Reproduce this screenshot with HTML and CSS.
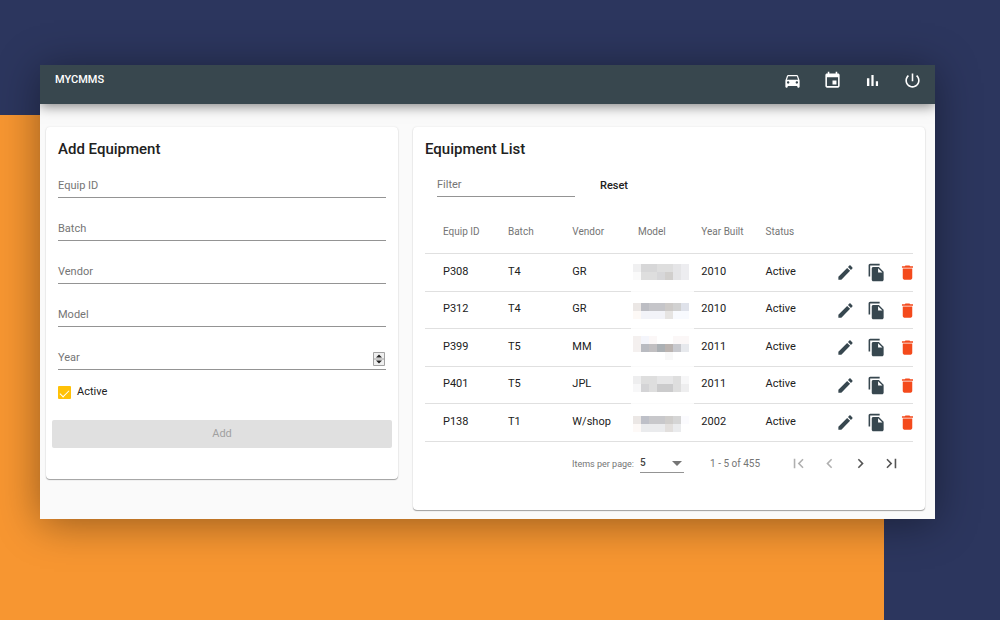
FILE: index.html
```html
<!DOCTYPE html>
<html lang="en">
<head>
<meta charset="utf-8">
<meta name="viewport" content="width=device-width, initial-scale=1">
<title>MYCMMS</title>
<link rel="stylesheet" href="styles.css">
</head>
<body>
<svg class="defs" aria-hidden="true">
  <symbol id="edit" viewBox="0 0 24 24"><path d="M3 17.250V21h3.750L17.810 9.940l-3.750-3.750L3 17.250zM20.710 7.040c.39-.39.39-1.020 0-1.410l-2.340-2.340c-.39-.39-1.020-.39-1.410 0l-1.830 1.830 3.750 3.750 1.830-1.830z"/></symbol>
  <symbol id="copy" viewBox="0 0 24 24"><path d="M16 1H4c-1.100 0-2 .9-2 2v14h2V3h12V1zm-1 4l6 6v10c0 1.100-.9 2-2 2H7.990C6.890 23 6 22.100 6 21V7c0-1.100.89-2 1.990-2h7zm-1 7h5.500L14 6.500V12z"/></symbol>
  <symbol id="trash" viewBox="0 0 24 24"><path d="M6 19c0 1.100.9 2 2 2h8c1.100 0 2-.9 2-2V7H6v12zM19 4h-3.500l-1-1h-5l-1 1H5v2h14V4z"/></symbol>
</svg>
<div class="window">
  <header class="topbar">
    <h1 class="brand">MYCMMS</h1>
    <nav class="nav">
      <a href="#equipment" aria-label="Equipment"><svg class="icon" viewBox="0 0 24 24"><path d="M18.920 6.010C18.720 5.420 18.160 5 17.500 5h-11c-.66 0-1.210.42-1.420 1.010L3 12v8c0 .55.45 1 1 1h1c.55 0 1-.45 1-1v-1h12v1c0 .55.45 1 1 1h1c.55 0 1-.45 1-1v-8l-2.080-5.990zM6.500 16c-.83 0-1.500-.67-1.500-1.500S5.670 13 6.500 13s1.500.67 1.500 1.500S7.330 16 6.500 16zm11 0c-.83 0-1.500-.67-1.500-1.500s.67-1.500 1.500-1.500 1.500.67 1.500 1.500-.67 1.500-1.500 1.500zM5 11l1.500-4.500h11L19 11H5z"/></svg></a>
      <a href="#calendar" aria-label="Calendar"><svg class="icon" viewBox="0 0 24 24"><path d="M17 12h-5v5h5v-5zM16 1v2H8V1H6v2H5c-1.110 0-1.990.9-1.990 2L3 19c0 1.100.89 2 2 2h14c1.100 0 2-.9 2-2V5c0-1.100-.9-2-2-2h-1V1h-2zm3 18H5V8h14v11z"/></svg></a>
      <a href="#reports" aria-label="Reports"><svg class="icon" viewBox="0 0 24 24"><path d="M5 9.200h3V19H5zM10.600 5h2.800v14h-2.800zm5.600 8H19v6h-2.800z"/></svg></a>
      <a href="#logout" aria-label="Log out"><svg class="icon" viewBox="0 0 24 24"><path d="M13 3h-2v10h2V3zm4.830 2.170l-1.420 1.420C17.990 7.860 19 9.810 19 12c0 3.870-3.130 7-7 7s-7-3.130-7-7c0-2.190 1.010-4.140 2.580-5.420L6.170 5.170C4.230 6.820 3 9.260 3 12c0 4.970 4.030 9 9 9s9-4.030 9-9c0-2.740-1.230-5.180-3.170-6.830z"/></svg></a>
    </nav>
  </header>
  <main class="content">
    <section class="card">
      <h2 class="title">Add Equipment</h2>
      <form class="form">
        <div class="field"><input id="equip-id" type="text"><label for="equip-id">Equip ID</label></div>
        <div class="field"><input id="batch" type="text"><label for="batch">Batch</label></div>
        <div class="field"><input id="vendor" type="text"><label for="vendor">Vendor</label></div>
        <div class="field"><input id="model" type="text"><label for="model">Model</label></div>
        <div class="field"><input id="year" type="number"><label for="year">Year</label><svg class="stepper" viewBox="0 0 12 14"><path fill="#efefef" stroke="#a2a2a2" d="M.5.5h11v13H.5zM.5 7h11"/><path fill="#222" d="M6 2.500l3 3H3zM6 11.500l3-3H3z"/></svg></div>
        <div class="check"><input id="active" type="checkbox" checked><label for="active">Active</label></div>
        <button class="add" type="submit" disabled>Add</button>
      </form>
    </section>
    <section class="card">
      <h2 class="title">Equipment List</h2>
      <div class="filter">
        <div class="field"><input id="filter" type="text"><label for="filter">Filter</label></div>
        <button class="reset" type="button">Reset</button>
      </div>
      <table class="list">
        <colgroup><col class="c-id"><col class="c-batch"><col class="c-vendor"><col class="c-model"><col class="c-year"><col class="c-status"><col class="c-actions"></colgroup>
        <thead>
          <tr><th>Equip ID</th><th>Batch</th><th>Vendor</th><th class="inset">Model</th><th class="inset">Year Built</th><th>Status</th><td></td></tr>
        </thead>
        <tbody>
          <tr><td>P308</td><td>T4</td><td>GR</td>
            <td class="masked"><svg class="mosaic" viewBox="0 0 60 32" shape-rendering="crispEdges"><path fill="#f0f0f1" d="M2 8h8v8H2z"/><path fill="#fafafa" d="M2 16h8v8H2z"/><path fill="#d7d7d8" d="M10 8h16v8H10z"/><path fill="#dedede" d="M26 8h16v8H26zM10 16h16v8H10z"/><path fill="#e5e5e7" d="M42 8h8v16h-8z"/><path fill="#d7d7d9" d="M26 16h8v8h-8z"/><path fill="#d1cfcd" d="M34 16h8v8h-8z"/><path fill="#ededf0" d="M50 8h8v16h-8z"/></svg></td>
            <td class="inset">2010</td><td>Active</td>
            <td class="actions"><div class="tools"><button type="button" aria-label="Edit P308"><svg class="icon"><use href="#edit"/></svg></button><button type="button" aria-label="Copy P308"><svg class="icon"><use href="#copy"/></svg></button><button class="delete" type="button" aria-label="Delete P308"><svg class="icon"><use href="#trash"/></svg></button></div></td></tr>
          <tr><td>P312</td><td>T4</td><td>GR</td>
            <td class="masked"><svg class="mosaic" viewBox="0 0 60 32" shape-rendering="crispEdges"><path fill="#ebe7e5" d="M2 10h8v8H2z"/><path fill="#fdf9f6" d="M2 18h8v8H2z"/><path fill="#bcbdc3" d="M10 10h8v8h-8z"/><path fill="#c5c5c9" d="M18 10h16v8H18z"/><path fill="#cdcac8" d="M34 10h8v8h-8z"/><path fill="#d1d1d1" d="M42 10h8v8h-8z"/><path fill="#dfe2ea" d="M50 10h8v8h-8z"/><path fill="#f2f3f8" d="M10 18h24v8H10z"/><path fill="#e6e4e2" d="M34 18h8v8h-8z"/><path fill="#f8fafe" d="M42 18h16v8H42z"/></svg></td>
            <td class="inset">2010</td><td>Active</td>
            <td class="actions"><div class="tools"><button type="button" aria-label="Edit P312"><svg class="icon"><use href="#edit"/></svg></button><button type="button" aria-label="Copy P312"><svg class="icon"><use href="#copy"/></svg></button><button class="delete" type="button" aria-label="Delete P312"><svg class="icon"><use href="#trash"/></svg></button></div></td></tr>
          <tr><td>P399</td><td>T5</td><td>MM</td>
            <td class="masked"><svg class="mosaic" viewBox="0 0 60 32" shape-rendering="crispEdges"><path fill="#f4f0ef" d="M2 5h8v16H2z"/><path fill="#f4f5fb" d="M10 5h8v8h-8z"/><path fill="#fbf7f7" d="M18 5h8v8h-8zM42 5h16v8H42z"/><path fill="#b9bbc1" d="M10 13h8v8h-8z"/><path fill="#c1bfc1" d="M18 13h8v8h-8z"/><path fill="#abb0b4" d="M26 13h8v8h-8z"/><path fill="#bab3b0" d="M34 13h8v8h-8z"/><path fill="#c8c9ce" d="M42 13h8v8h-8z"/><path fill="#e7e9ed" d="M50 13h8v8h-8z"/><path fill="#f8f8f8" d="M34 21h8v8h-8z"/></svg></td>
            <td class="inset">2011</td><td>Active</td>
            <td class="actions"><div class="tools"><button type="button" aria-label="Edit P399"><svg class="icon"><use href="#edit"/></svg></button><button type="button" aria-label="Copy P399"><svg class="icon"><use href="#copy"/></svg></button><button class="delete" type="button" aria-label="Delete P399"><svg class="icon"><use href="#trash"/></svg></button></div></td></tr>
          <tr><td>P401</td><td>T5</td><td>JPL</td>
            <td class="masked"><svg class="mosaic" viewBox="0 0 60 32" shape-rendering="crispEdges"><path fill="#eeeeef" d="M2 8h8v8H2zM50 16h8v8h-8z"/><path fill="#f7f7f8" d="M2 16h8v8H2zM50 8h8v8h-8z"/><path fill="#dedede" d="M10 8h16v8H10zM42 8h8v16h-8z"/><path fill="#e6e6e7" d="M26 8h16v8H26z"/><path fill="#d4d4d6" d="M10 16h8v8h-8z"/><path fill="#dedede" d="M18 16h8v8h-8z"/><path fill="#cbcbcc" d="M26 16h16v8H26z"/></svg></td>
            <td class="inset">2011</td><td>Active</td>
            <td class="actions"><div class="tools"><button type="button" aria-label="Edit P401"><svg class="icon"><use href="#edit"/></svg></button><button type="button" aria-label="Copy P401"><svg class="icon"><use href="#copy"/></svg></button><button class="delete" type="button" aria-label="Delete P401"><svg class="icon"><use href="#trash"/></svg></button></div></td></tr>
          <tr><td>P138</td><td>T1</td><td>W/shop</td>
            <td class="masked"><svg class="mosaic" viewBox="0 0 60 32" shape-rendering="crispEdges"><path fill="#ebe7e5" d="M2 10h8v8H2z"/><path fill="#fdf9f7" d="M2 18h8v8H2z"/><path fill="#bec0c8" d="M10 10h8v8h-8z"/><path fill="#c8c8cb" d="M18 10h16v8H18z"/><path fill="#cfcdcb" d="M34 10h8v8h-8z"/><path fill="#d5d5d5" d="M42 10h8v8h-8z"/><path fill="#eaebed" d="M10 18h24v8H10zM42 18h8v8h-8z"/><path fill="#e2dfdd" d="M34 18h8v8h-8z"/><path fill="#fbfbfe" d="M50 10h8v8h-8z"/></svg></td>
            <td class="inset">2002</td><td>Active</td>
            <td class="actions"><div class="tools"><button type="button" aria-label="Edit P138"><svg class="icon"><use href="#edit"/></svg></button><button type="button" aria-label="Copy P138"><svg class="icon"><use href="#copy"/></svg></button><button class="delete" type="button" aria-label="Delete P138"><svg class="icon"><use href="#trash"/></svg></button></div></td></tr>
        </tbody>
      </table>
      <div class="paginator">
        <label class="per-page" for="size">Items per page:</label>
        <div class="size"><select id="size"><option>5</option><option>10</option><option>25</option></select></div>
        <span class="range">1 - 5 of 455</span>
        <div class="pager">
          <button type="button" aria-label="First page" disabled><svg class="icon" viewBox="0 0 24 24"><path d="M18.410 16.590L13.820 12l4.590-4.590L17 6l-6 6 6 6zM6 6h2v12H6z"/></svg></button>
          <button type="button" aria-label="Previous page" disabled><svg class="icon" viewBox="0 0 24 24"><path d="M15.410 7.410L14 6l-6 6 6 6 1.410-1.410L10.830 12z"/></svg></button>
          <button type="button" aria-label="Next page"><svg class="icon" viewBox="0 0 24 24"><path d="M10 6L8.590 7.410 13.170 12l-4.580 4.590L10 18l6-6z"/></svg></button>
          <button type="button" aria-label="Last page"><svg class="icon" viewBox="0 0 24 24"><path d="M5.590 7.410L10.180 12l-4.590 4.590L7 18l6-6-6-6zM16 6h2v12h-2z"/></svg></button>
        </div>
      </div>
    </section>
  </main>
</div>
</body>
</html>
```
FILE: styles.css
```css
* { box-sizing: border-box; }

body {
  margin: 0;
  min-height: 100vh;
  padding: 65px 65px 65px 40px;
  background: linear-gradient(#f79631, #f79631) 0 115px / calc(100% - 116px) 100% no-repeat #2c365e;
  color: #212121;
  font: 11px/16px Roboto, sans-serif;
}

button, input, select { font: inherit; color: inherit; }
button { border: 0; padding: 0; background: none; cursor: pointer; }
button:disabled { cursor: default; }

.defs { display: none; }
.icon { display: block; width: 19px; height: 19px; fill: currentColor; }

.window {
  background: #fafafa;
  box-shadow: 0 4px 40px rgba(0, 0, 0, .4);
}

.topbar {
  display: flex;
  justify-content: space-between;
  align-items: center;
  padding: 6px 13px 14px 15px;
  background: #38474e;
  color: #fff;
  box-shadow: 0 2px 12px rgba(0, 0, 0, .5);
  clip-path: inset(0 0 -20px 0);
}
.brand { margin: 0 0 2px; font-size: 11px; line-height: 16px; font-weight: 500; }
.nav { display: flex; gap: 21px; }
.nav a { color: inherit; }

.content {
  display: grid;
  grid-template-columns: 352fr 512fr;
  align-items: start;
  gap: 15px;
  padding: 23px 10px 9px 6px;
}

.card {
  padding: 12px;
  border-radius: 4px;
  background: #fff;
  box-shadow: 0 1px 1px rgba(0, 0, 0, .35), 0 0 2px rgba(0, 0, 0, .1);
}
.title { margin: 0; font-size: 15px; line-height: 20px; font-weight: 500; }

.field { position: relative; height: 27px; border-bottom: 1px solid #949494; }
.field label { position: absolute; left: 0; top: 7px; color: #757575; pointer-events: none; }
.field input { width: 100%; height: 26px; padding: 6px 0 0; border: 0; outline: 0; background: none; }
.stepper { position: absolute; right: 1px; top: 9px; width: 12px; height: 14px; pointer-events: none; }

.form { display: grid; gap: 16px; margin-top: 12px; padding-bottom: 19px; }

.check { display: flex; align-items: center; gap: 6px; margin-top: -2px; }
.check input {
  appearance: none;
  display: grid;
  place-items: center;
  width: 13px;
  height: 13px;
  margin: 0;
  border-radius: 1px;
  background: #ffc107;
}
.check input:checked::before {
  content: "";
  width: 8px;
  height: 4px;
  border: solid #fff;
  border-width: 0 0 1px 1px;
  transform: rotate(-45deg);
}

.add {
  height: 28px;
  margin: 4px -6px 0;
  border-radius: 2px;
  background: #e0e0e0;
  color: #a0a0a0;
}

.filter { display: flex; align-items: center; gap: 25px; margin: 11px 0 15px 12px; }
.filter .field { width: 138px; }
.reset { font-weight: 500; padding-top: 4px; }

.list { width: 100%; table-layout: fixed; border-collapse: separate; border-spacing: 0; }
.c-id { width: 17%; }
.c-batch { width: 13.2%; }
.c-vendor { width: 12%; }
.c-model { width: 13%; }
.c-year { width: 14.6%; }
.c-status { width: 13.2%; }
.c-actions { width: 17%; }
.list th, .list td { height: 38px; padding: 0 0 2px; border-bottom: 1px solid #e0e0e0; text-align: left; }
.list thead th, .list thead td { height: 42px; }
.list tbody tr:nth-child(even) td { height: 37px; }
.list th { color: #757575; font-size: 10px; font-weight: 400; }
.list th:first-child, .list td:first-child { padding-left: 18px; }
.list .inset { padding-left: 7px; }
.list tbody tr:not(:last-child) .masked { border-bottom-color: #fafafa; }
.mosaic { display: block; width: 60px; height: 32px; }
.tools { display: flex; gap: 12px; padding: 2px 0 0 6px; overflow: hidden; color: #37474f; }
.tools button { flex: none; }
.tools .delete { color: #f44a1c; }

.paginator {
  display: flex;
  justify-content: flex-end;
  align-items: center;
  padding: 12px 12px 25px 0;
  color: #757575;
  font-size: 10px;
}
.per-page { font-size: 9px; }
.size { position: relative; margin: 0 26px 0 6px; border-bottom: 1px solid #949494; }
.size::after {
  content: "";
  position: absolute;
  right: 2px;
  top: 7px;
  border: solid transparent;
  border-width: 5px 5px 0;
  border-top-color: #757575;
  pointer-events: none;
}
.size select { display: block; appearance: none; width: 44px; height: 18px; border: 0; background: none; color: #424242; font-weight: 500; }
.pager { display: flex; gap: 12px; margin-left: 29px; color: #555; }
.pager button:disabled { color: #b0b0b0; }

@media (max-width: 760px) {
  .content { grid-template-columns: 1fr; }
}
```
